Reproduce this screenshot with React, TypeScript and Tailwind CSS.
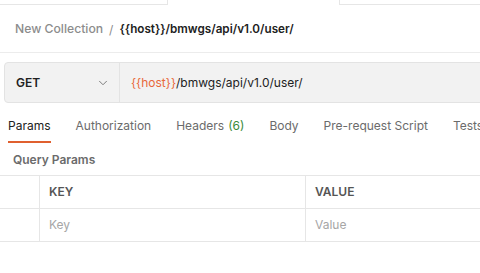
import { ChevronDown } from "lucide-react";

const tabs = [
  { label: "Params", active: true },
  { label: "Authorization" },
  { label: "Headers", count: "(6)" },
  { label: "Body" },
  { label: "Pre-request Script" },
  { label: "Tests" },
];

export default function App() {
  return (
    <div
      className="w-[480px] h-[273px] overflow-hidden bg-white"
      style={{ fontFamily: "Inter, 'Noto Sans', sans-serif" }}
    >
      {/* top tab strip */}
      <div className="flex h-[5px]">
        <div className="w-[168px] border-r border-b border-[#e6e6e6]" />
        <div className="w-[171px]" />
        <div className="flex-1 border-l border-b border-[#e6e6e6]" />
      </div>

      {/* breadcrumb */}
      <div className="h-[48px] flex items-center pt-[2px] px-[15px] border-b border-[#ececec] text-[12px] whitespace-nowrap">
        <span className="text-[#8c8c8c] font-medium text-[12.2px]">New Collection</span>
        <span className="text-[#8c8c8c] mx-[6px]">/</span>
        <span className="text-[#212121] font-semibold text-[11.7px]">{"{{host}}/bmwgs/api/v1.0/user/"}</span>
      </div>

      {/* request bar */}
      <div className="mt-[9px] ml-[4px] w-[520px] h-[41px] flex rounded-l-[4px] border border-[#e3e3e3] bg-[#f2f2f2]">
        <div className="w-[115px] flex items-center justify-between pl-[11px] pr-[9px] border-r border-[#e3e3e3]">
          <span className="text-[12px] font-semibold text-[#212121]">GET</span>
          <ChevronDown className="w-[14px] h-[14px] text-[#6b6b6b]" strokeWidth={1.5} />
        </div>
        <div className="flex items-center pl-[11px] text-[12px] text-[#212121]">
          <span className="text-[#e8683a]">{"{{host}}"}</span>
          <span>/bmwgs/api/v1.0/user/</span>
        </div>
      </div>

      {/* tabs */}
      <div className="flex h-[40px] pl-[8px] gap-[25px] whitespace-nowrap text-[12px]">
        {tabs.map((t) => (
          <div
            key={t.label}
            className={
              "flex items-center h-full border-b-2 pt-[8px] " +
              (t.active ? "border-[#e0602f] text-[#212121]" : "border-transparent text-[#6b6b6b]")
            }
          >
            {t.label}
            {t.count && <span className="ml-[4px] text-[#3a8b3a]">{t.count}</span>}
          </div>
        ))}
      </div>

      {/* query params */}
      <div className="h-[32px] flex items-center px-[13px] pt-[1px] text-[12px] font-semibold text-[#6b6b6b]">
        Query Params
      </div>

      <div className="border-t border-[#e6e6e6]">
        <div className="flex h-[33px] border-b border-[#e6e6e6] text-[12px] font-semibold text-[#555]">
          <div className="w-[40px] border-r border-[#e6e6e6]" />
          <div className="w-[266px] flex items-center pl-[9px] border-r border-[#e6e6e6]">KEY</div>
          <div className="flex-1 flex items-center pl-[9px]">VALUE</div>
        </div>
        <div className="flex h-[33px] border-b border-[#e6e6e6] text-[12px] text-[#a6a6a6]">
          <div className="w-[40px] border-r border-[#e6e6e6]" />
          <div className="w-[266px] flex items-center pl-[9px] border-r border-[#e6e6e6]">Key</div>
          <div className="flex-1 flex items-center pl-[9px]">Value</div>
        </div>
      </div>
    </div>
  );
}
